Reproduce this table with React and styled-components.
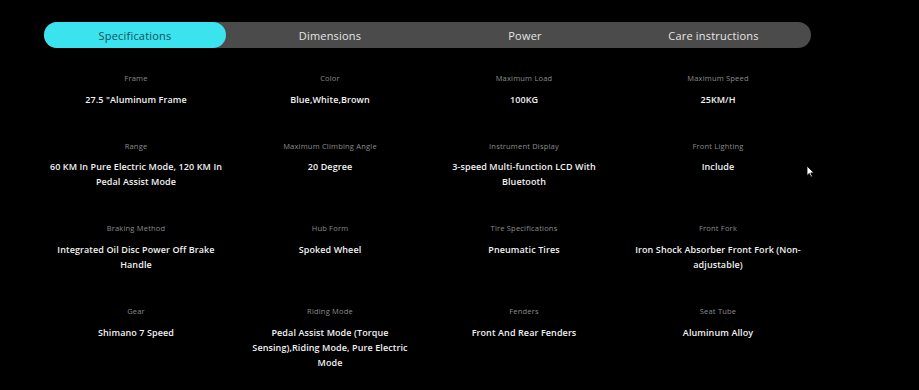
import React, { useState } from 'react'
import styled, { createGlobalStyle } from 'styled-components'

const GlobalStyle = createGlobalStyle`
    html, body {
        margin: 0;
        padding: 0;
        background: #000;
    }
    body {
        font-family: "Open Sans", "Liberation Sans", sans-serif;
        color: #fff;
    }
`

const Page = styled.div`
    position: relative;
    width: 919px;
    height: 390px;
    overflow: hidden;
    background: #000;
    padding: 22px 0 0 39px;
    box-sizing: border-box;
`

const TabBar = styled.div`
    display: grid;
    grid-template-columns: 182px 208px 182px 1fr;
    width: 767px;
    height: 26px;
    margin-left: 5px;
    background: #4b4b4b;
    border-radius: 13px;
`

const Tab = styled.button`
    border: 0;
    margin: 0;
    padding: 0;
    height: 26px;
    border-radius: 13px;
    background: ${({ $active }) => ($active ? '#3be3ee' : 'transparent')};
    color: ${({ $active }) => ($active ? '#0d5257' : '#e6e6e6')};
    font-family: inherit;
    font-size: 11px;
    font-weight: 500;
    letter-spacing: 0.2px;
    cursor: pointer;
`

const SpecGrid = styled.div`
    display: grid;
    grid-template-columns: repeat(4, 194px);
    row-gap: 33.2px;
    margin-top: 24px;
`

const SpecItem = styled.div`
    display: flex;
    flex-direction: column;
    align-items: center;
    text-align: center;
`

const SpecLabel = styled.div`
    font-size: 7.5px;
    line-height: 12px;
    color: #8c8c8c;
    letter-spacing: 0.2px;
`

const SpecValue = styled.div`
    margin-top: 7.5px;
    max-width: 176px;
    font-size: 9px;
    font-weight: 600;
    line-height: 15px;
    color: #f2f2f2;
    letter-spacing: 0.1px;
`

const Pointer = styled.svg`
    position: absolute;
    left: 806px;
    top: 165px;
`

const tabs = ['Specifications', 'Dimensions', 'Power', 'Care instructions']

const specs = [
    ['Frame', '27.5 "Aluminum Frame'],
    ['Color', 'Blue,White,Brown'],
    ['Maximum Load', '100KG'],
    ['Maximum Speed', '25KM/H'],
    ['Range', '60 KM In Pure Electric Mode, 120 KM In Pedal Assist Mode'],
    ['Maximum Climbing Angle', '20 Degree'],
    ['Instrument Display', '3-speed Multi-function LCD With Bluetooth'],
    ['Front Lighting', 'Include'],
    ['Braking Method', 'Integrated Oil Disc Power Off Brake Handle'],
    ['Hub Form', 'Spoked Wheel'],
    ['Tire Specifications', 'Pneumatic Tires'],
    ['Front Fork', 'Iron Shock Absorber Front Fork (Non-adjustable)'],
    ['Gear', 'Shimano 7 Speed'],
    ['Riding Mode', 'Pedal Assist Mode (Torque Sensing),Riding Mode, Pure Electric Mode'],
    ['Fenders', 'Front And Rear Fenders'],
    ['Seat Tube', 'Aluminum Alloy'],
]

const App = () => {
    const [active, setActive] = useState(0)

    return <Page>
        <GlobalStyle />
        <TabBar>
            {tabs.map((t, i) => (
                <Tab key={t} $active={i === active} onClick={() => setActive(i)}>
                    {t}
                </Tab>
            ))}
        </TabBar>
        <SpecGrid>
            {specs.map(([label, value]) => (
                <SpecItem key={label}>
                    <SpecLabel>{label}</SpecLabel>
                    <SpecValue>{value}</SpecValue>
                </SpecItem>
            ))}
        </SpecGrid>
        <Pointer width="9" height="13" viewBox="0 0 9 13">
            <path d="M1 1 L1 10.5 L3.3 8.4 L5 12 L6.4 11.4 L4.8 7.9 L8 7.9 Z" fill="#fff" stroke="#000" strokeWidth="0.8" />
        </Pointer>
    </Page>
}

export default App
